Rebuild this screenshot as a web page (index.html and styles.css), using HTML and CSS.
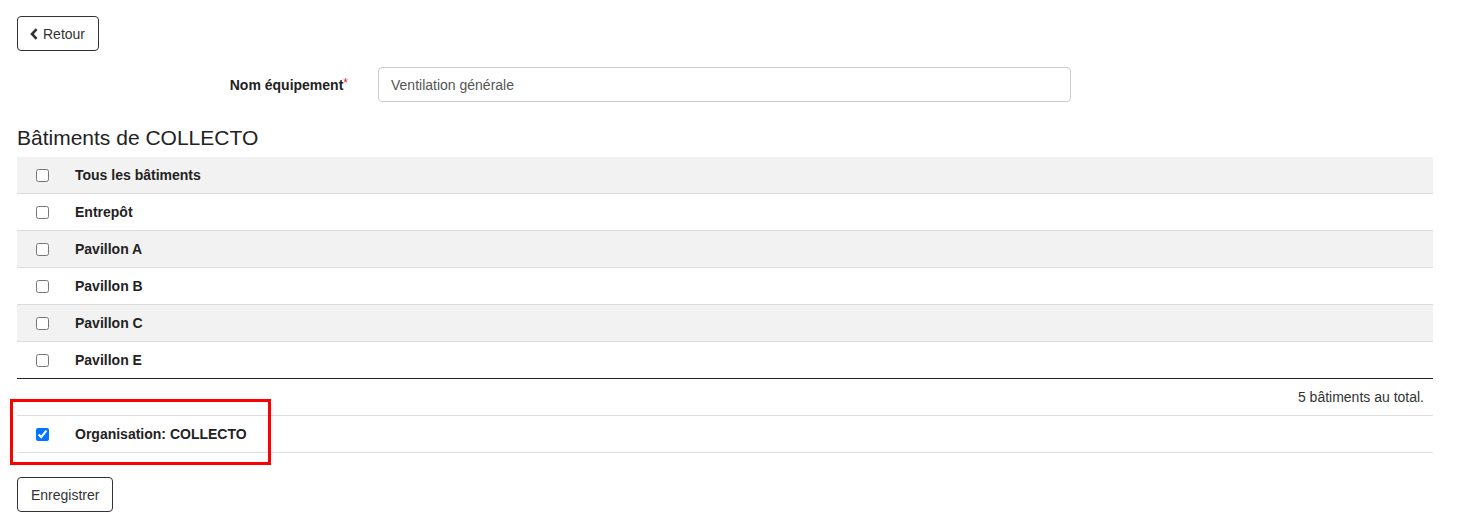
FILE: index.html
```html
<!DOCTYPE html>
<html lang="fr">
<head>
<meta charset="utf-8">
<title>Équipement</title>
<link rel="stylesheet" href="styles.css">
</head>
<body>
<div class="page">
  <button class="btn btn-back" type="button">
    <svg class="chev" width="8" height="12" viewBox="0 0 8 12" aria-hidden="true"><path d="M6.6 1.2 L2 6 L6.6 10.8" fill="none" stroke="#333" stroke-width="2.6" stroke-linejoin="miter"/></svg>
    Retour
  </button>

  <div class="form-row">
    <label class="form-label" for="nom">Nom équipement<span class="req">*</span></label>
    <input class="form-input" id="nom" type="text" value="Ventilation générale">
  </div>

  <h3 class="section-title">Bâtiments de COLLECTO</h3>

  <table class="tbl">
    <tbody>
      <tr class="odd"><td class="cb"><input type="checkbox"></td><td class="name">Tous les bâtiments</td></tr>
      <tr><td class="cb"><input type="checkbox"></td><td class="name">Entrepôt</td></tr>
      <tr class="odd"><td class="cb"><input type="checkbox"></td><td class="name">Pavillon A</td></tr>
      <tr><td class="cb"><input type="checkbox"></td><td class="name">Pavillon B</td></tr>
      <tr class="odd"><td class="cb"><input type="checkbox"></td><td class="name">Pavillon C</td></tr>
      <tr><td class="cb"><input type="checkbox"></td><td class="name">Pavillon E</td></tr>
    </tbody>
    <tfoot>
      <tr><td colspan="2" class="total">5 bâtiments au total.</td></tr>
    </tfoot>
  </table>

  <div class="org-wrap">
    <table class="tbl org">
      <tbody>
        <tr><td class="cb"><input type="checkbox" checked></td><td class="name">Organisation: COLLECTO</td></tr>
      </tbody>
    </table>
    <div class="highlight"></div>
  </div>

  <button class="btn btn-save" type="button">Enregistrer</button>
</div>
</body>
</html>
```

FILE: styles.css
```css
* { box-sizing: border-box; }
html, body { margin: 0; background: #fff; }
body {
  font-family: "Liberation Sans", Arial, Helvetica, sans-serif;
  font-size: 14px;
  line-height: 20px;
  color: #333;
}
.page {
  padding: 16px 29px 0 17px;
}
.btn {
  display: inline-flex;
  align-items: center;
  gap: 5px;
  height: 35px;
  padding: 0 13px 0 12px;
  font-family: inherit;
  font-size: 14px;
  color: #333;
  background: #fff;
  border: 1px solid #333;
  border-radius: 4px;
}
.btn-save { padding: 0 13px; }
.chev { display: block; }
.form-row {
  display: flex;
  align-items: center;
  margin-top: 16px;
}
.form-label {
  width: 361px;
  padding-right: 30px;
  text-align: right;
  font-weight: bold;
  color: #222;
}
.req { color: #e4252b; font-weight: normal; font-size: 12px; vertical-align: top; line-height: 16px; }
.form-input {
  width: 693px;
  height: 35px;
  margin-left: 0;
  padding: 6px 12px;
  font-family: inherit;
  font-size: 14px;
  color: #555;
  border: 1px solid #ccc;
  border-radius: 4px;
}
.section-title {
  margin: 22px 0 5px;
  font-size: 21px;
  font-weight: normal;
  line-height: 28px;
  color: #222;
}
.tbl {
  width: 1416px;
  border-collapse: collapse;
}
.tbl td {
  padding: 8px;
  border-top: 1px solid #ddd;
  vertical-align: middle;
}
.tbl tbody tr:first-child td { border-top: 0; }
.tbl tr.odd td { background: #f2f2f2; }
.tbl td.cb {
  width: 50px;
  padding-left: 0;
  padding-right: 0;
  text-align: center;
}
.tbl td.cb input {
  margin: 0;
  width: 13px;
  height: 13px;
  vertical-align: middle;
  position: relative;
  top: -1px;
}
.tbl td.name { font-weight: bold; color: #222; }
.tbl tfoot td {
  border-top: 1px solid #222;
}
.tbl td.total {
  text-align: right;
  padding-right: 9px;
}
.org-wrap {
  position: relative;
}
.tbl.org tbody tr:first-child td {
  border-top: 1px solid #ddd;
  border-bottom: 1px solid #ddd;
}
.highlight {
  position: absolute;
  left: -7px;
  top: -16px;
  width: 261px;
  height: 66px;
  border: 3px solid #f00;
  pointer-events: none;
}
.btn-save {
  margin-top: 24px;
}
```
